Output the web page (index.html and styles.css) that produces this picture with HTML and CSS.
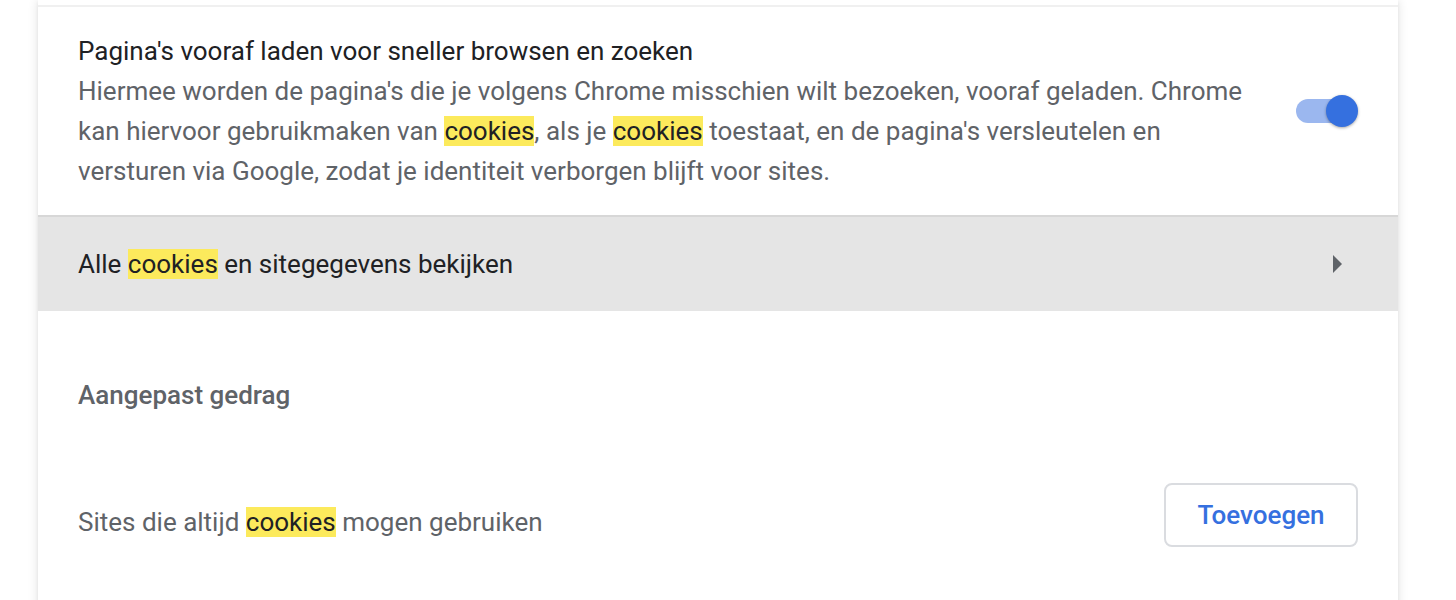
FILE: index.html
```html
<!DOCTYPE html>
<html lang="nl">
<head>
<meta charset="utf-8">
<title>Cookies</title>
<link rel="stylesheet" href="styles.css">
</head>
<body>
<div class="card">
  <div class="row row-two-line">
    <div class="text">
      <div class="title">Pagina's vooraf laden voor sneller browsen en zoeken</div>
      <div class="desc">Hiermee worden de pagina's die je volgens Chrome misschien wilt bezoeken, vooraf geladen. Chrome kan hiervoor gebruikmaken van <mark class="hl">cookies</mark>, als je <mark class="hl">cookies</mark> toestaat, en de pagina's versleutelen en versturen via Google, zodat je identiteit verborgen blijft voor sites.</div>
    </div>
    <div class="toggle" role="switch" aria-checked="true">
      <span class="toggle-bar"></span>
      <span class="toggle-knob"></span>
    </div>
  </div>
  <div class="row row-link">
    <div class="link-label">Alle <mark class="hl">cookies</mark> en sitegegevens bekijken</div>
    <svg class="arrow" width="10" height="18" viewBox="0 0 10 18"><path d="M0 0 L9 9 L0 18 Z" fill="#5f6368"/></svg>
  </div>
  <div class="subheader">Aangepast gedrag</div>
  <div class="row row-add">
    <div class="add-label">Sites die altijd <mark class="hl">cookies</mark> mogen gebruiken</div>
    <button class="btn">Toevoegen</button>
  </div>
</div>
</body>
</html>
```
FILE: styles.css
```css
html, body {
  margin: 0;
  padding: 0;
  background: #ffffff;
}
body {
  font-family: Roboto, "Liberation Sans", Arial, sans-serif;
  font-size: 26px;
  line-height: 40px;
  color: #202124;
  overflow: hidden;
}
.card {
  margin-left: 38px;
  width: 1360px;
  padding-top: 5px;
  padding-bottom: 200px;
  background: #fff;
  box-shadow: 0 0 10px rgba(0, 0, 0, 0.12), 0 2px 3px rgba(0, 0, 0, 0.06);
}
.row {
  display: flex;
  align-items: center;
  padding: 0 40px;
  border-top: 2px solid rgba(0, 0, 0, 0.06);
}
.row-two-line {
  padding-top: 24px;
  padding-bottom: 24px;
}
.text {
  flex: 1;
  min-width: 0;
}
.title {
  color: #202124;
}
.desc {
  color: #5f6368;
}
.hl {
  background: #fcea5c;
  color: #202124;
  padding: 0;
}
.toggle {
  position: relative;
  width: 62px;
  height: 32px;
  margin-left: 40px;
  flex: none;
}
.toggle-bar {
  position: absolute;
  left: 0;
  top: 4px;
  width: 54px;
  height: 24px;
  border-radius: 12px;
  background: #9bb7ef;
}
.toggle-knob {
  position: absolute;
  right: 0;
  top: 0;
  width: 32px;
  height: 32px;
  border-radius: 50%;
  background: #3570df;
  box-shadow: 0 1px 3px rgba(0, 0, 0, 0.35);
}
.row-link {
  height: 96px;
  box-sizing: border-box;
  background: rgba(0, 0, 0, 0.1);
  justify-content: space-between;
}
.arrow {
  display: block;
  margin-right: 15px;
}
.subheader {
  padding: 64px 40px 0;
  font-weight: 500;
  color: #5f6368;
}
.row-add {
  border-top: none;
  padding-top: 68px;
  justify-content: space-between;
  align-items: flex-start;
}
.add-label {
  color: #5f6368;
  margin-top: 19px;
}
.btn {
  width: 194px;
  height: 64px;
  border: 2px solid #dadce0;
  border-radius: 8px;
  background: #fff;
  font-family: Roboto, "Liberation Sans", Arial, sans-serif;
  font-size: 26px;
  font-weight: 500;
  color: #3570df;
  padding: 0;
}
```
